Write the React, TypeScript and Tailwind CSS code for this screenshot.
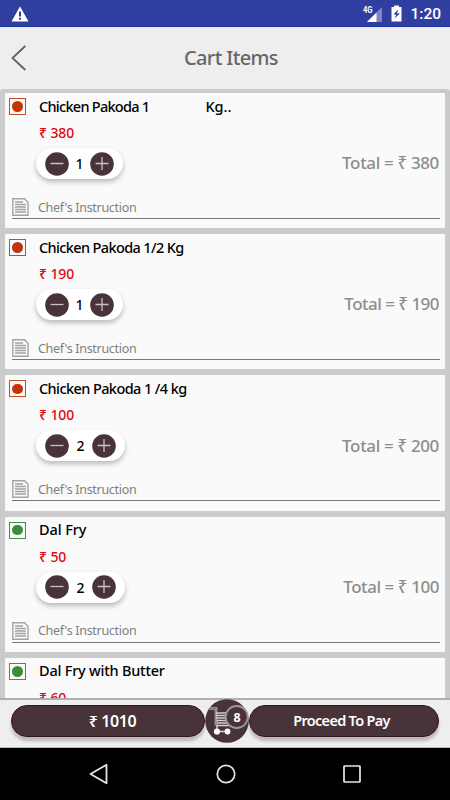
import React from "react";

const items = [
  { name: "Chicken Pakoda 1", extra: "Kg..", price: 380, qty: 1, veg: false, cls: "tracking-[-0.73px]", totalCls: "tracking-[-0.35px]" },
  { name: "Chicken Pakoda 1/2 Kg", extra: "", price: 190, qty: 1, veg: false, cls: "tracking-[-0.63px]", totalCls: "tracking-[-0.52px]" },
  { name: "Chicken Pakoda 1 /4 kg", extra: "", price: 100, qty: 2, veg: false, cls: "tracking-[-0.59px]", totalCls: "tracking-[-0.35px]" },
  { name: "Dal Fry", extra: "", price: 50, qty: 2, veg: true, cls: "tracking-[-0.1px]", totalCls: "tracking-[-0.44px]" },
  { name: "Dal Fry with Butter", extra: "", price: 60, qty: 2, veg: true, cls: "tracking-[-0.22px]", totalCls: "tracking-[-0.35px]" },
];

const StatusBar = () => (
  <div className="flex h-[27px] shrink-0 items-center border-b border-[#1c35a5] bg-[#303f9f] pr-[9px] pl-[11px] text-white">
    <svg width="18" height="16" viewBox="0 0 18 16" className="mt-px">
      <path d="M9 0.5 17.5 15.5H0.5Z" fill="#fff" />
      <path d="M8 5.5h2v5H8zM8 11.7h2v2H8z" fill="#303f9f" />
    </svg>
    <svg width="20" height="18" viewBox="0 0 20 18" className="mt-px ml-auto">
      <path d="M19 2V17H4Z" fill="#7d87c4" />
      <path d="M13.500 7.500V17H4Z" fill="#fff" />
      <text x="0" y="7.500" fontSize="8.500" fontWeight="700" fill="#fff" fontFamily="Roboto, sans-serif" textLength="9.5" lengthAdjust="spacingAndGlyphs">4G</text>
    </svg>
    <svg width="11" height="17" viewBox="0 0 11 17" className="mt-px ml-2">
      <path d="M3 2V0.500h5V2h2.500v14.500H0.500V2Z" fill="#fff" />
      <path d="M7.500 4.300 2.300 9.500h2.900L3.700 13.500 8.800 8.300H5.900Z" fill="#303f9f" />
    </svg>
    <span className="mt-[3px] ml-[8px] font-[Roboto,sans-serif] text-[15.5px] leading-none font-medium">1:20</span>
  </div>
);

const Header = () => (
  <div className="flex h-[62px] shrink-0 items-center bg-[#eeeeee] pl-[11px]">
    <svg width="16" height="26" viewBox="0 0 16 26" fill="none" stroke="#606060" strokeWidth="1.8">
      <path d="M14.300 1 1.500 13 14.300 25" />
    </svg>
    <h1 className="ml-[157px] text-[20px] leading-normal font-medium tracking-[-0.64px] whitespace-nowrap text-[#666]">Cart Items</h1>
  </div>
);

const RoundButton = ({ plus }: { plus?: boolean }) => (
  <svg width="24" height="24" viewBox="0 0 24 24" className="shrink-0">
    <circle cx="12" cy="12" r="11.800" fill="#483338" />
    <path d={plus ? "M5.500 11.500h13M12 5v13" : "M5.500 11.500h13"} stroke="#c9c2c4" strokeWidth="1.300" />
  </svg>
);

const NoteIcon = () => (
  <svg width="17" height="18" viewBox="0 0 17 18" fill="none" stroke="#a3a3a3">
    <path d="M0.800 0.800H12.500L16 4.300V17.200H0.800Z" strokeWidth="1.400" />
    <path d="M3 4h8M3 6.500h11M3 9h11M3 11.500h11M3 14h11" strokeWidth="1.500" />
  </svg>
);

const CartRow = ({ item }: { item: (typeof items)[number] }) => (
  <div className="h-[135.2px] shrink-0 rounded-[1px] bg-[#fafafa]">
    <div className="flex h-[27px] items-center pl-1">
      <div className={`flex h-[17px] w-[17px] items-center justify-center border ${item.veg ? "border-[#429247]" : "border-[#c94b20]"}`}>
        <div className={`h-[10.5px] w-[10.5px] rounded-full ${item.veg ? "bg-[#388e3c]" : "bg-[#c5330b]"}`} />
      </div>
      <span className={`ml-[13px] text-[14.5px] leading-normal font-medium whitespace-nowrap text-black ${item.cls}`}>{item.name}</span>
      {item.extra && <span className="ml-[56px] text-[14.5px] leading-normal font-medium">{item.extra}</span>}
    </div>
    <div className="flex h-[25px] items-center pl-[34px] text-[14px] font-medium tracking-[-0.1px] text-[#dc0a12]">₹ {item.price}</div>
    <div className="mt-[3px] flex h-[31px] items-center justify-between pr-[6px] pl-[31px]">
      <div className={`flex h-[31px] items-center justify-between rounded-full bg-white px-[9px] shadow-[0_3px_5px_rgba(0,0,0,0.25)] ${item.qty === 1 ? "w-[87px]" : "w-[89px]"}`}>
        <RoundButton />
        <span className="text-[14px] font-medium text-black">{item.qty}</span>
        <RoundButton plus />
      </div>
      <span className={`mb-px text-[17px] leading-normal font-medium text-[#8d8d8d] ${item.totalCls}`}>Total = ₹ {item.price * item.qty}</span>
    </div>
    <div className="mt-[17px] mr-[5px] ml-[7px] flex h-[23px] items-center border-b border-[#777]">
      <NoteIcon />
      <span className="mt-[2px] ml-[9px] text-[12.5px] leading-none tracking-[-0.3px] text-[#808080]">Chef's Instruction</span>
    </div>
  </div>
);

const CartBadge = () => (
  <svg width="44" height="44" viewBox="0 0 44 44" className="relative shrink-0">
    <circle cx="22" cy="22" r="21.800" fill="#483338" />
    <path d="M4.500 9.500h6.500V26.500" fill="none" stroke="#b9b2b4" strokeWidth="2.600" />
    <path d="M4.500 9.500h6.500V26.500" fill="none" stroke="#6d5b60" strokeWidth="0.800" />
    <path d="M11 14h16M11 16.500h16M11 19h16M11.500 21.500h15M12 24h14M12 26.500h14" stroke="#d5d0d1" strokeWidth="1.500" />
    <path d="M12 32.500h11M12 32V26" fill="none" stroke="#d5d0d1" strokeWidth="1.500" />
    <circle cx="12" cy="32.500" r="3.100" fill="#fff" />
    <circle cx="22.500" cy="32.500" r="2.900" fill="#fff" />
    <circle cx="31.700" cy="18" r="11" fill="#483338" stroke="#999" strokeWidth="1.800" />
    <text x="32" y="22.500" textAnchor="middle" fontSize="12.500" fontWeight="700" fill="#fff">8</text>
  </svg>
);

const Footer = () => (
  <div className="flex h-[50px] shrink-0 border-t-2 border-b border-t-[#b0b0b0] border-b-[#b9b9b9] bg-[#eeeeee] pl-[11px] text-white">
    <button className="mt-[5px] h-[32px] w-[194px] rounded-full border border-[#38141f] bg-[#483338] pl-[9px] text-[16px] leading-normal font-semibold tracking-[-0.4px] shadow-[0_4px_3px_rgba(0,0,0,0.22)]">₹ 1010</button>
    <div className="mt-[-1px]"><CartBadge /></div>
    <button className="mt-[5px] h-[32px] w-[190px] rounded-full border border-[#38141f] bg-[#483338] pr-[5px] text-[14.5px] leading-normal font-semibold tracking-[-0.7px] shadow-[0_4px_3px_rgba(0,0,0,0.22)]">Proceed To Pay</button>
  </div>
);

const NavBar = () => (
  <div className="flex h-[52px] shrink-0 items-center justify-between bg-black pr-[89px] pl-[89px]">
    <svg width="20" height="22" viewBox="0 0 20 22" fill="none" stroke="#e6e6e6" strokeWidth="1.800" strokeLinejoin="round">
      <path d="M17.500 1.800V20.200L1.500 11Z" />
    </svg>
    <svg width="20" height="20" viewBox="0 0 20 20" fill="none" stroke="#e6e6e6" strokeWidth="1.700" className="mr-px">
      <circle cx="10" cy="10" r="8.700" />
    </svg>
    <svg width="18" height="18" viewBox="0 0 18 18" fill="none" stroke="#e6e6e6" strokeWidth="1.700">
      <rect x="1" y="1" width="16" height="16" rx="0.500" />
    </svg>
  </div>
);

const App = () => {
  return (
    <div className="flex h-[800px] w-[450px] flex-col overflow-hidden bg-[#eeeeee] font-['Noto_Sans',sans-serif]">
      <StatusBar />
      <Header />
      <div className="flex h-[609px] shrink-0 flex-col gap-[6px] overflow-hidden rounded-t-[3px] bg-[#cbcbcb] px-[5px] pt-[4px]">
        {items.map((item) => (
          <CartRow key={item.name} item={item} />
        ))}
      </div>
      <Footer />
      <NavBar />
    </div>
  );
};

export default App;
